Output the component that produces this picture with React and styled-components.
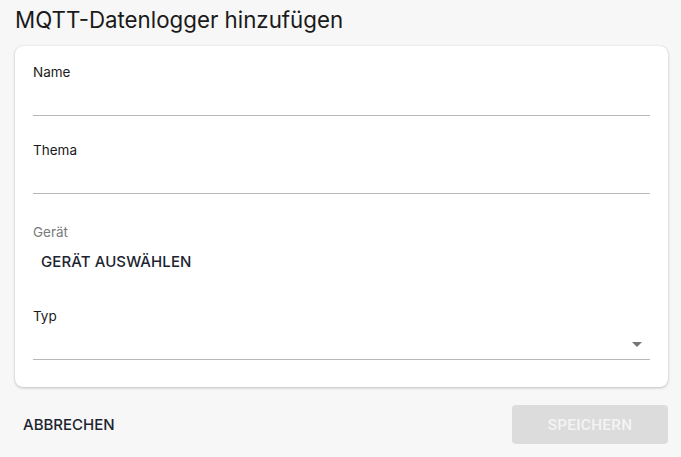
import React from "react";
import styled, { createGlobalStyle } from "styled-components";

const Global = createGlobalStyle`
  html, body { margin: 0; padding: 0; background: #f7f7f7; }
  body { font-family: Inter, "Noto Sans", sans-serif; color: #1a2027; }
`;

const Page = styled.div`
  width: 681px;
  height: 457px;
  box-sizing: border-box;
  padding: 5px 13px 0 15px;
  display: flex;
  flex-direction: column;
`;

const Title = styled.h1`
  margin: 0 0 11px 0;
  font-size: 22.3px;
  font-weight: 400;
  line-height: 30px;
  color: #1a1a1a;
`;

const Card = styled.div`
  background: #fff;
  border-radius: 8px;
  box-shadow: 0 1px 3px rgba(0, 0, 0, 0.22), 0 0 1px rgba(0, 0, 0, 0.12);
  padding: 17px 18px 27px 18px;
  display: flex;
  flex-direction: column;
`;

const Field = styled.div`
  display: flex;
  flex-direction: column;
  margin-bottom: ${(p) => p.$mb || 0}px;
`;

const Label = styled.label`
  font-size: 13.5px;
  line-height: 18px;
  color: ${(p) => (p.$muted ? "#7a7a7a" : "#1a1a1a")};
`;

const Input = styled.div`
  height: 34px;
  border-bottom: 1px solid #b8b8b8;
  position: relative;
`;

const Arrow = styled.span`
  position: absolute;
  right: 8px;
  bottom: 12px;
  width: 0;
  height: 0;
  border-left: 5px solid transparent;
  border-right: 5px solid transparent;
  border-top: 5px solid #757575;
`;

const TextButton = styled.button`
  align-self: flex-start;
  margin-top: 3px;
  background: none;
  border: none;
  padding: 8px 8px;
  font-family: Inter, "Noto Sans", sans-serif;
  font-size: 15px;
  line-height: 20px;
  font-weight: 500;
  color: #1c2430;
  letter-spacing: 0.1px;
  cursor: pointer;
`;

const Footer = styled.div`
  display: flex;
  justify-content: space-between;
  align-items: center;
  margin-top: 18px;
`;

const CancelButton = styled.button`
  background: none;
  border: none;
  padding: 8px;
  font-family: Inter, "Noto Sans", sans-serif;
  font-size: 15px;
  line-height: 20px;
  font-weight: 500;
  color: #1c2430;
`;

const SaveButton = styled.button`
  width: 156px;
  height: 39px;
  background: #dcdcdc;
  border: none;
  border-radius: 4px;
  font-family: Roboto, "Noto Sans", sans-serif;
  font-size: 15.3px;
  font-weight: 500;
  color: #f4f4f4;
  letter-spacing: 0.3px;
`;

export default function App() {
  return (
    <>
      <Global />
      <Page>
        <Title>MQTT-Datenlogger hinzufügen</Title>
        <Card>
          <Field $mb={25}>
            <Label>Name</Label>
            <Input />
          </Field>
          <Field $mb={29}>
            <Label>Thema</Label>
            <Input />
          </Field>
          <Field $mb={27}>
            <Label $muted>Gerät</Label>
            <TextButton>GERÄT AUSWÄHLEN</TextButton>
          </Field>
          <Field>
            <Label>Typ</Label>
            <Input>
              <Arrow />
            </Input>
          </Field>
        </Card>
        <Footer>
          <CancelButton>ABBRECHEN</CancelButton>
          <SaveButton disabled>SPEICHERN</SaveButton>
        </Footer>
      </Page>
    </>
  );
}
